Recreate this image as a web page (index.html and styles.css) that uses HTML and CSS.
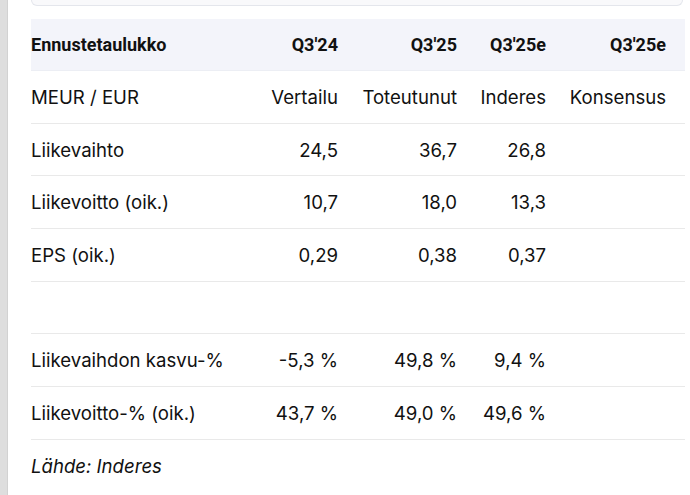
FILE: index.html
```html
<!DOCTYPE html>
<html lang="fi">
<head>
<meta charset="utf-8">
<link rel="stylesheet" href="styles.css">
</head>
<body>
<div class="page">
  <div class="rail"></div>
  <main class="main">
    <div class="card-tail"></div>
    <div class="table">
      <div class="row head">
        <div class="label">Ennustetaulukko</div>
        <div class="num">Q3'24</div>
        <div class="num">Q3'25</div>
        <div class="num">Q3'25e</div>
        <div class="num">Q3'25e</div>
      </div>
      <div class="row">
        <div class="label">MEUR / EUR</div>
        <div class="num">Vertailu</div>
        <div class="num">Toteutunut</div>
        <div class="num">Inderes</div>
        <div class="num">Konsensus</div>
      </div>
      <div class="row">
        <div class="label">Liikevaihto</div>
        <div class="num">24,5</div>
        <div class="num">36,7</div>
        <div class="num">26,8</div>
        <div class="num"></div>
      </div>
      <div class="row">
        <div class="label">Liikevoitto (oik.)</div>
        <div class="num">10,7</div>
        <div class="num">18,0</div>
        <div class="num">13,3</div>
        <div class="num"></div>
      </div>
      <div class="row">
        <div class="label">EPS (oik.)</div>
        <div class="num">0,29</div>
        <div class="num">0,38</div>
        <div class="num">0,37</div>
        <div class="num"></div>
      </div>
      <div class="row">
        <div class="label"></div>
        <div class="num"></div>
        <div class="num"></div>
        <div class="num"></div>
        <div class="num"></div>
      </div>
      <div class="row">
        <div class="label">Liikevaihdon kasvu-%</div>
        <div class="num">-5,3 %</div>
        <div class="num">49,8 %</div>
        <div class="num">9,4 %</div>
        <div class="num"></div>
      </div>
      <div class="row">
        <div class="label">Liikevoitto-% (oik.)</div>
        <div class="num">43,7 %</div>
        <div class="num">49,0 %</div>
        <div class="num">49,6 %</div>
        <div class="num"></div>
      </div>
      <div class="row source">
        <div class="label">Lähde: Inderes</div>
      </div>
    </div>
  </main>
</div>
</body>
</html>
```

FILE: styles.css
```css
html, body {
  margin: 0;
  padding: 0;
  background: #ffffff;
}
body {
  font-family: "Inter", "Liberation Sans", sans-serif;
  color: #111111;
}
.page {
  display: flex;
  width: 690px;
  height: 495px;
  overflow: hidden;
}
.rail {
  width: 7px;
  flex: 0 0 7px;
  background: #dedede;
  border-right: 1px solid #d2d2d2;
}
.main {
  flex: 1;
  padding-left: 23px;
  padding-right: 5px;
}
.card-tail {
  height: 6px;
  margin-right: 2px;
  box-sizing: border-box;
  border: 1px solid #e4e6ec;
  border-top: none;
  border-radius: 0 0 12px 12px;
  background: #f9f9fb;
  margin-bottom: 13px;
}
.table {
  display: flex;
  flex-direction: column;
}
.row {
  display: grid;
  grid-template-columns: 1fr 110px 119px 89px 120px;
  padding-right: 9px;
  height: 52.7px;
  box-sizing: border-box;
  border-bottom: 1px solid #e9e9e9;
  align-items: center;
  font-size: 18.6px;
}
.row.head {
  background: #f3f4fa;
  height: 52px;
  font-family: "Roboto", "Liberation Sans", sans-serif;
  font-size: 18px;
  font-weight: 700;
  color: #111111;
  border-bottom-color: #eceef4;
}
.label {
  white-space: nowrap;
}
.num {
  text-align: right;
  padding-right: 10px;
  white-space: nowrap;
}
.row.source {
  border-bottom: none;
  font-style: italic;
}
```
